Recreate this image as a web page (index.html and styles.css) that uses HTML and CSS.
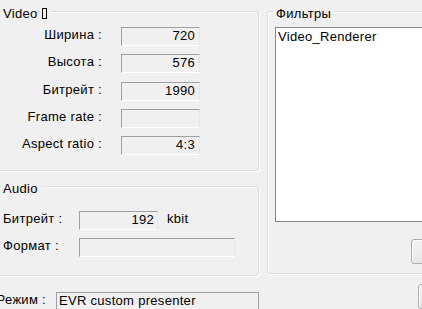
FILE: index.html
```html
<!DOCTYPE html>
<html>
<head>
<meta charset="utf-8">
<link rel="stylesheet" href="styles.css">
</head>
<body>
<div class="page">
  <div class="left">
    <div class="group video">
      <div class="title">Video <span class="tofu"></span></div>
      <div class="vgrid">
        <div class="lbl">Ширина :</div><div class="field num">720</div>
        <div class="lbl">Высота :</div><div class="field num">576</div>
        <div class="lbl">Битрейт :</div><div class="field num">1990</div>
        <div class="lbl">Frame rate :</div><div class="field num"></div>
        <div class="lbl">Aspect ratio :</div><div class="field num">4:3</div>
      </div>
    </div>
    <div class="group audio">
      <div class="title">Audio</div>
      <div class="agrid">
        <div class="albl">Битрейт :</div><div class="field num">192</div><div class="unit">kbit</div>
        <div class="albl">Формат :</div><div class="field wide"></div>
      </div>
    </div>
    <div class="mode">
      <div class="mlbl">Режим :</div>
      <div class="field mfield">EVR custom presenter</div>
    </div>
  </div>
  <div class="right">
    <div class="group filters">
      <div class="title">Фильтры</div>
      <div class="listbox">
        <div class="item">Video_Renderer</div>
      </div>
      <div class="btnrow"><div class="btn"></div></div>
    </div>
    <div class="btnrow2"><div class="btn"></div></div>
  </div>
</div>
</body>
</html>
```
FILE: styles.css
```css
html, body {
  margin: 0;
  padding: 0;
}
body {
  width: 422px;
  height: 309px;
  overflow: hidden;
  background: #f0f0f0;
  font-family: "Liberation Sans", Arial, sans-serif;
  font-size: 13px;
  line-height: 15px;
  letter-spacing: 0.3px;
  color: #000;
}
.page {
  display: flex;
  align-items: flex-start;
  margin-left: -6px;
}
.left {
  flex: 0 0 265px;
  width: 265px;
  display: flex;
  flex-direction: column;
}
.right {
  flex: 0 0 229px;
  width: 229px;
  margin-left: 8px;
  display: flex;
  flex-direction: column;
}
.group {
  border: 1px solid #d5dfe5;
  border-radius: 3px;
  box-shadow: 1px 1px 0 #fff, inset 1px 1px 0 #fff;
  display: flex;
  flex-direction: column;
}
.title {
  align-self: flex-start;
  margin: -6px 0 0 6px;
  padding: 0 4px 0 2px;
  background: #f0f0f0;
  height: 15px;
}
.tofu {
  display: inline-block;
  width: 3px;
  height: 9px;
  border: 1px solid #000;
  vertical-align: -1px;
  margin-left: 1px;
}
.video {
  margin-top: 11px;
}
.vgrid {
  margin-top: 6px;
  padding-bottom: 15px;
  display: grid;
  grid-template-columns: 109px 79px;
  column-gap: 17px;
  row-gap: 8.25px;
}
.lbl {
  text-align: right;
  padding-right: 2px;
  white-space: nowrap;
}
.field {
  box-sizing: border-box;
  height: 19px;
  border: 1px solid;
  border-color: #a0a0a0 #e6e6e6 #fff #a0a0a0;
  background: #f0f0f0;
  padding: 0 4px;
  white-space: nowrap;
  overflow: hidden;
}
.num {
  text-align: right;
}
.audio {
  margin-top: 15px;
}
.agrid {
  margin-top: 15px;
  padding-bottom: 18px;
  display: grid;
  grid-template-columns: 84px 79px auto;
  row-gap: 8px;
}
.albl {
  padding-left: 8px;
  white-space: nowrap;
}
.agrid .num {
  padding-right: 3px;
}
.unit {
  margin-left: 9px;
}
.wide {
  grid-column: 2 / span 2;
  width: 156px;
}
.mode {
  margin-top: 16px;
  display: flex;
  align-items: flex-start;
}
.mlbl {
  width: 52px;
  flex: 0 0 52px;
  text-align: right;
  white-space: nowrap;
  margin-right: 10px;
}
.mfield {
  flex: 1;
  padding: 0 2px;
  border-color: #a0a0a0 #a0a0a0 #a0a0a0 #a0a0a0;
}
.filters {
  margin-top: 11px;
  padding-bottom: 9px;
}
.filters .title {
  margin-left: 6px;
  padding: 0 3px 0 2px;
}
.listbox {
  margin: 6px 7px 0 7px;
  height: 195px;
  box-sizing: border-box;
  background: #fff;
  border: 1px solid #828790;
}
.item {
  padding: 1px 2px;
  white-space: nowrap;
}
.btnrow {
  margin-top: 17px;
  display: flex;
  justify-content: flex-end;
  padding-right: 8px;
}
.btnrow2 {
  margin-top: 10px;
  display: flex;
  justify-content: flex-end;
  padding-right: 2px;
}
.btn {
  box-sizing: border-box;
  width: 76px;
  height: 25px;
  border: 1px solid #adadad;
  border-radius: 3px;
  background: linear-gradient(#f4f4f4, #e6e6e6);
  box-shadow: inset 1px 1px 0 #fcfcfc;
}
```
